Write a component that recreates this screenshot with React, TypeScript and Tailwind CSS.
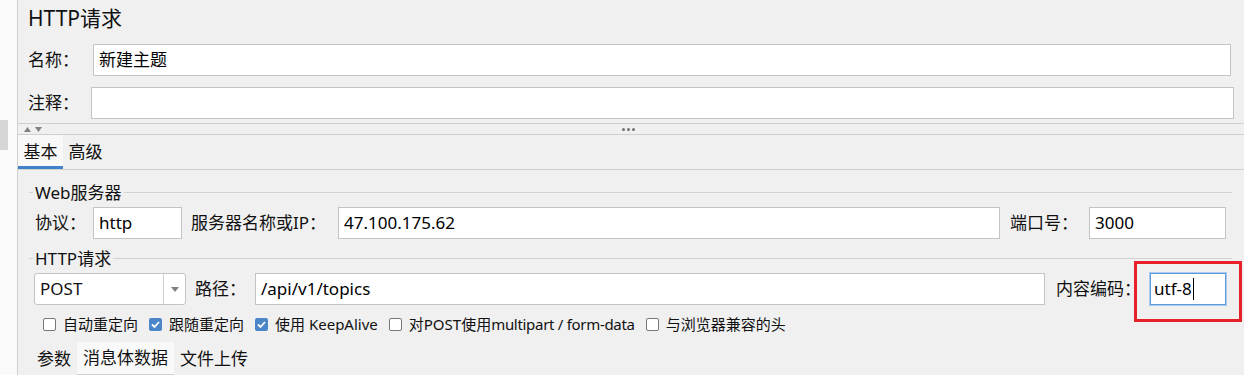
import React from 'react';

const font = "font-['Noto_Sans','Noto_Sans_CJK_SC',sans-serif]";

const Input: React.FC<{ value?: string; className?: string }> = ({ value = '', className = '' }) => (
  <div className={`h-[32px] bg-white border border-[#c4c4c4] flex items-center px-[5px] text-[17px] text-black ${className}`}>
    {value}
  </div>
);

const Legend: React.FC<{ title: string }> = ({ title }) => (
  <div className="h-[20px] flex items-center">
    <div className="w-[4px] h-px bg-[#d2d2d2]" />
    <span className="px-[2px] text-[17px] leading-none text-[#111]">{title}</span>
    <div className="flex-1 h-px bg-[#d2d2d2]" />
  </div>
);

const Check: React.FC<{ checked?: boolean; label: React.ReactNode }> = ({ checked, label }) => (
  <div className="flex items-center gap-[7px]">
    {checked ? (
      <div className="w-[13px] h-[13px] rounded-[2px] bg-[#4a86c8] flex items-center justify-center">
        <svg width="11" height="11" viewBox="0 0 11 11">
          <polyline points="2,5.5 4.5,8 9,3" fill="none" stroke="white" strokeWidth="1.8" />
        </svg>
      </div>
    ) : (
      <div className="w-[13px] h-[13px] rounded-[2px] bg-white border border-[#777]" />
    )}
    <span className="text-[15px] leading-none text-[#111]">{label}</span>
  </div>
);

const App: React.FC = () => {
  return (
    <div className={`w-[1244px] h-[375px] overflow-hidden flex bg-[#f0f0f0] relative ${font}`}>
      {/* left tree edge */}
      <div className="w-[18px] shrink-0 bg-[#fafafa] border-r border-[#d0d0d0] flex flex-col">
        <div className="h-[120px]" />
        <div className="w-[8px] h-[30px] bg-[#d6d6d6]" />
      </div>

      <div className="flex-1 flex flex-col">
        <div className="h-[38px] flex items-center pl-[10px] text-[21px] text-[#111]">HTTP请求</div>

        <div className="mt-[6px] h-[32px] flex items-center">
          <div className="w-[75px] pl-[10px] text-[17px] text-[#111]">名称：</div>
          <Input value="新建主题" className="w-[1138px]" />
        </div>

        <div className="mt-[11px] h-[32px] flex items-center">
          <div className="w-[73px] pl-[10px] text-[17px] text-[#111]">注释：</div>
          <Input className="w-[1143px]" />
        </div>

        {/* split divider */}
        <div className="mt-[4px] h-[12px] border-y border-[#cfcfcf] flex items-center relative">
          <div className="pl-[6px] flex items-center gap-[4px]">
            <svg width="7" height="5" viewBox="0 0 7 5"><polygon points="0,5 3.5,0 7,5" fill="#808080" /></svg>
            <svg width="7" height="5" viewBox="0 0 7 5"><polygon points="0,0 3.5,5 7,0" fill="#808080" /></svg>
          </div>
          <div className="ml-[580px] flex gap-[2px]">
            <div className="w-[3px] h-[3px] rounded-full bg-[#707070]" />
            <div className="w-[3px] h-[3px] rounded-full bg-[#707070]" />
            <div className="w-[3px] h-[3px] rounded-full bg-[#707070]" />
          </div>
        </div>

        {/* tabs */}
        <div className="h-[35px] flex border-b border-[#d0d0d0] text-[17px] text-[#111]">
          <div className="w-[45px] flex items-center justify-center bg-[#f8f8f8] border-b-[3px] border-[#3f82c9] pt-[3px]">基本</div>
          <div className="w-[45px] flex items-center justify-center">高级</div>
        </div>

        <div className="pl-[11px] pr-[12px] flex flex-col">
          <div className="mt-[12px]"><Legend title="Web服务器" /></div>
          <div className="mt-[5px] flex items-center text-[17px] text-[#111]">
            <div className="w-[64px] pl-[6px]">协议：</div>
            <Input value="http" className="w-[89px]" />
            <div className="ml-[9px] w-[147px]">服务器名称或IP：</div>
            <Input value="47.100.175.62" className="w-[662px]" />
            <div className="ml-[10px] w-[79px]">端口号：</div>
            <Input value="3000" className="w-[137px]" />
          </div>

          <div className="mt-[9px]"><Legend title="HTTP请求" /></div>
          <div className="mt-[5px] flex items-center text-[17px] text-[#111]">
            <div className="ml-[5px] w-[152px] h-[32px] bg-white border border-[#c4c4c4] rounded-[3px] flex">
              <div className="flex-1 flex items-center pl-[5px]">POST</div>
              <div className="w-[22px] border-l border-[#d0d0d0] flex items-center justify-center">
                <svg width="8" height="5" viewBox="0 0 8 5"><polygon points="0,0 4,5 8,0" fill="#808080" /></svg>
              </div>
            </div>
            <div className="ml-[9px] w-[60px]">路径：</div>
            <Input value="/api/v1/topics" className="w-[790px]" />
            <div className="ml-[11px] w-[94px]">内容编码：</div>
            <div className="w-[76px] h-[32px] bg-white border border-[#5f98d8] shadow-[0_0_0_1px_#aacbf0] flex items-center pl-[3px] text-[17px] text-black">
              utf-8<span className="ml-[1px] w-px h-[22px] bg-black" />
            </div>
          </div>

          <div className="mt-[9px] h-[20px] pl-[14px] flex items-center gap-[11px]">
            <Check label="自动重定向" />
            <Check checked label="跟随重定向" />
            <Check checked label="使用 KeepAlive" />
            <Check label={<>对POST使用<span className="tracking-[-0.3px]">multipart / form-data</span></>} />
            <Check label="与浏览器兼容的头" />
          </div>

          <div className="mt-[8px] h-[33px] pl-[2px] flex text-[17px] text-[#111]">
            <div className="px-[6px] flex items-center">参数</div>
            <div className="px-[6px] flex items-center bg-[#f9f9f9] border-b border-[#cdcdcd]">消息体数据</div>
            <div className="px-[6px] flex items-center">文件上传</div>
          </div>
        </div>
      </div>

      {/* highlight annotation */}
      <div className="absolute left-[1134px] top-[261px] w-[108px] h-[61px] border-[3px] border-[#e8202a]" />
    </div>
  );
};

export default App;
